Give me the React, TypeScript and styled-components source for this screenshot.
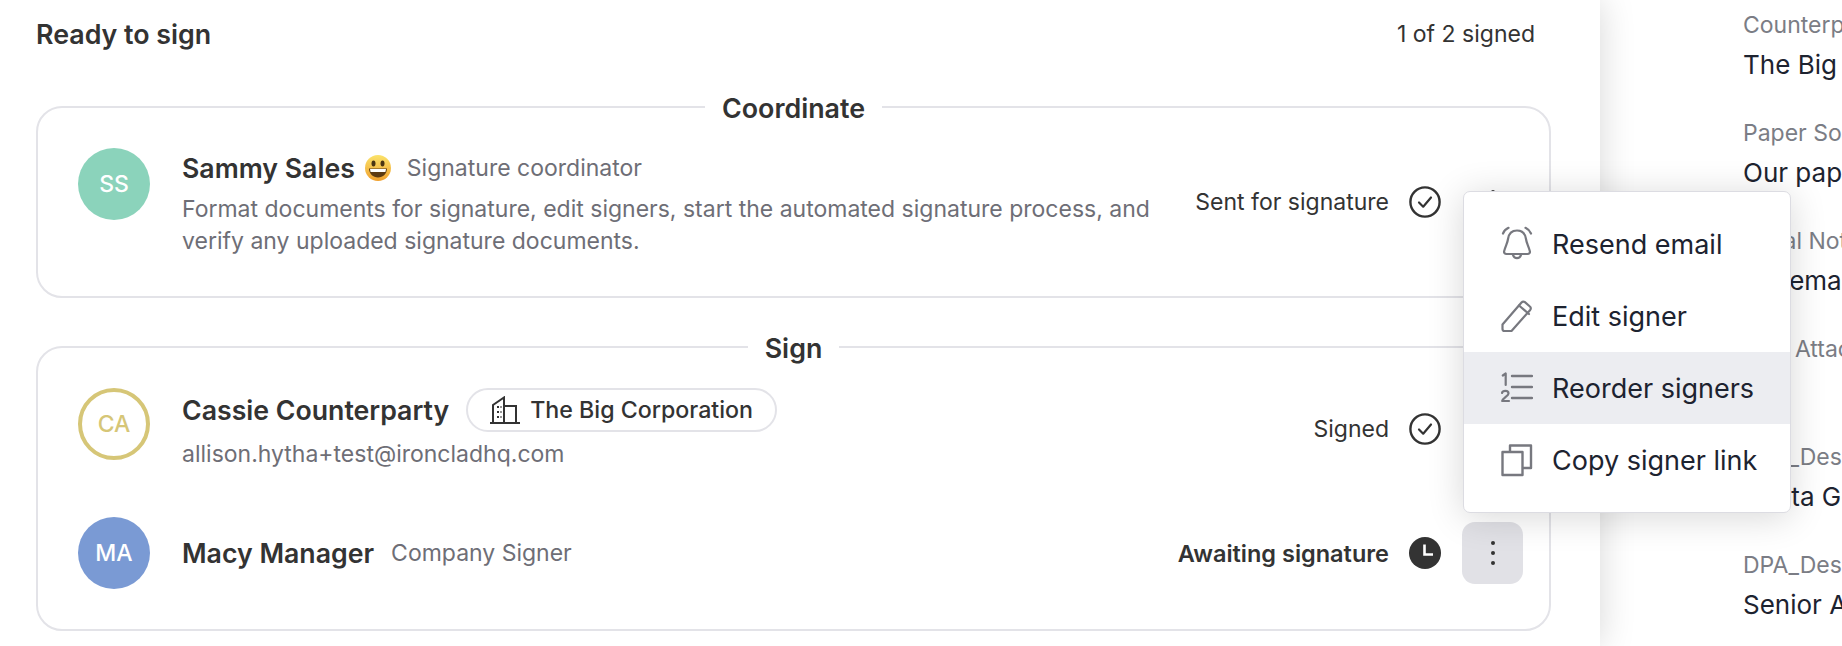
import React from "react";
import styled, { createGlobalStyle } from "styled-components";

const Global = createGlobalStyle`
  html, body { margin: 0; padding: 0; background: #fff; overflow: hidden; }
  body { font-family: Inter, "Liberation Sans", sans-serif; color: #333; }
  * { box-sizing: border-box; }
`;

const Page = styled.div`
  position: relative;
  display: flex;
  width: 1842px;
  height: 646px;
  overflow: hidden;
`;
const Main = styled.main`
  position: relative;
  z-index: 1;
  flex: 0 0 1600px;
  padding: 14px 49px 0 36px;
  background: #fff;
  box-shadow: 0 0 34px rgba(0, 0, 0, 0.16);
`;
const Header = styled.header`
  display: flex;
  align-items: center;
  justify-content: space-between;
  height: 40px;
  padding-right: 16px;
  margin-bottom: 38px;
`;
const Title = styled.h1`
  margin: 0;
  font-size: 26.8px;
  font-weight: 600;
  color: #333;
`;
const Count = styled.span`
  font-size: 23px;
  color: #333;
`;
const Card = styled.fieldset`
  margin: 0 0 34px;
  min-width: 0;
  border: 2px solid #e3e3e8;
  border-radius: 26px;
  padding: 26px 40px 40px;
  display: flex;
  flex-direction: column;
`;
const Legend = styled.legend`
  margin: 0 auto;
  padding: 0 17px;
  height: 30px;
  line-height: 32px;
  font-size: 26.8px;
  font-weight: 600;
  color: #333;
`;
const Row = styled.div<{ $height: number; $gap?: number }>`
  display: flex;
  align-items: center;
  min-height: ${(p) => p.$height}px;
  margin-right: -14px;
  margin-bottom: ${(p) => p.$gap ?? 0}px;
`;
const Avatar = styled.div<{ $bg?: string; $ring?: string; $top?: boolean }>`
  flex: 0 0 72px;
  height: 72px;
  border-radius: 50%;
  align-self: ${(p) => (p.$top ? "flex-start" : "center")};
  display: flex;
  align-items: center;
  justify-content: center;
  font-size: 23px;
  font-weight: 500;
  color: ${(p) => p.$ring ?? "#fff"};
  background: ${(p) => p.$bg ?? "#fff"};
  border: ${(p) => (p.$ring ? `4px solid ${p.$ring}` : "none")};
`;
const Info = styled.div`
  flex: 1;
  min-width: 0;
  margin-left: 32px;
  display: flex;
  flex-direction: column;
`;
const NameLine = styled.div`
  display: flex;
  align-items: center;
  min-height: 40px;
`;
const Name = styled.span`
  font-size: 26.7px;
  font-weight: 600;
  color: #333;
`;
const Role = styled.span<{ $left: number }>`
  margin-left: ${(p) => p.$left}px;
  font-size: 23px;
  color: #6e6e76;
`;
const Description = styled.p`
  margin: 5px 0 -1px;
  width: 990px;
  font-size: 23px;
  line-height: 32px;
  color: #6e6e76;
`;
const Email = styled.div`
  margin-top: 6px;
  font-size: 23px;
  line-height: 32px;
  color: #6e6e76;
`;
const Pill = styled.span`
  display: inline-flex;
  align-items: center;
  gap: 10px;
  height: 44px;
  margin-left: 17px;
  padding: 0 22px;
  border: 2px solid #e3e3e8;
  border-radius: 22px;
  font-size: 23.2px;
  font-weight: 500;
  color: #333;
`;
const StatusText = styled.span<{ $strong?: boolean }>`
  font-size: ${(p) => (p.$strong ? 23.5 : 23)}px;
  font-weight: ${(p) => (p.$strong ? 600 : 400)};
  color: #333;
  white-space: nowrap;
`;
const StatusIcon = styled.svg`
  flex: 0 0 32px;
  width: 32px;
  height: 32px;
  margin: 0 21px 0 20px;
`;
const More = styled.button<{ $active?: boolean }>`
  flex: 0 0 61px;
  width: 61px;
  height: 62px;
  padding: 0;
  border: 0;
  border-radius: 13px;
  background: ${(p) => (p.$active ? "#e1e1e6" : "transparent")};
  display: flex;
  flex-direction: column;
  align-items: center;
  justify-content: center;
  gap: 6px;
`;
const Dot = styled.i`
  width: 4px;
  height: 4px;
  border-radius: 50%;
  background: #333;
`;
const Side = styled.aside`
  flex: 1;
  min-width: 0;
  padding: 9px 0 0 143px;
  display: flex;
  flex-direction: column;
  gap: 34px;
  overflow: hidden;
  background: #fff;
`;
const Field = styled.div`
  display: flex;
  flex-direction: column;
  gap: 6px;
  height: 74px;
  white-space: nowrap;
`;
const FieldLabel = styled.div`
  font-size: 23px;
  line-height: 32px;
  color: #7b7d85;
`;
const FieldValue = styled.div`
  font-size: 26px;
  line-height: 36px;
  color: #1d2330;
`;
const Menu = styled.div`
  position: absolute;
  z-index: 5;
  left: 1463px;
  top: 191px;
  width: 328px;
  height: 322px;
  padding: 16px 0;
  background: #fff;
  border: 1px solid #dcdce2;
  border-radius: 7px;
  box-shadow: 0 4px 36px rgba(0, 0, 0, 0.16);
`;
const MenuItem = styled.div<{ $active?: boolean }>`
  display: flex;
  align-items: center;
  gap: 19px;
  height: 72px;
  padding-left: 37px;
  font-size: 27px;
  color: #1d2330;
  background: ${(p) => (p.$active ? "#ecedf1" : "transparent")};
`;
const MenuIcon = styled.svg`
  flex: 0 0 32px;
  width: 32px;
  height: 36px;
  fill: none;
  stroke: #77787f;
  stroke-width: 2.2;
  stroke-linecap: round;
  stroke-linejoin: round;
`;
const Emoji = styled.svg`
  width: 26px;
  height: 26px;
  margin: 0 16px 0 10px;
`;
const BuildingIcon = styled.svg`
  width: 30px;
  height: 28px;
  fill: none;
  stroke: #333;
  stroke-width: 2;
`;

const Check = () => (
  <StatusIcon viewBox="0 0 32 32" fill="none" stroke="#333">
    <circle cx="16" cy="16" r="14.6" strokeWidth="2.4" />
    <path d="M10 16.5l4.2 4.2L22 11.5" strokeWidth="2.2" strokeLinecap="round" strokeLinejoin="round" />
  </StatusIcon>
);
const Clock = () => (
  <StatusIcon viewBox="0 0 32 32">
    <circle cx="16" cy="16" r="16" fill="#333" />
    <path d="M15.5 7.5V17.5H24" fill="none" stroke="#fff" strokeWidth="2.6" />
  </StatusIcon>
);
const Dots = ({ active }: { active?: boolean }) => (
  <More $active={active} aria-label="More">
    <Dot />
    <Dot />
    <Dot />
  </More>
);

const menuIcons = {
  bell: (
    <>
      <path d="M2 7.5C3 5 5 3 7.5 1.8M30 7.5C29 5 27 3 24.5 1.8" />
      <path d="M5.5 28c-1.8 0-2.8-1.3-2.3-3C5 19 6.5 17 7 13 7.8 7.5 11 4.5 16 4.5S24.200 7.500 25 13c.5 4 2 6 3.800 12 .5 1.700-.5 3-2.300 3z" />
      <path d="M12 29c.6 2 2.200 3.200 4 3.200s3.400-1.200 4-3.200" />
    </>
  ),
  pencil: (
    <>
      <path d="M1.500 26.500 20.500 4.500c1-1.100 2.300-1.200 3.400-.3l5 4.300c1.100.9 1.200 2.300.3 3.400L10.500 33H3.500c-1.200 0-2-.8-2-2z" />
      <path d="M18 7.500l10 8.500" />
    </>
  ),
  order: (
    <>
      <path d="M1.800 5.500 4.700 3.500V15M1 23c.5-2.600 6.500-3 6.500.4 0 2.400-5.700 4.400-6.300 7.600h6.800" strokeWidth="2.200" />
      <path d="M11 6h20M11 17h20M11 28h20" strokeWidth="2.400" />
    </>
  ),
  copy: (
    <>
      <path d="M9 9.500V3.500h21v22.500h-8" strokeWidth="2.400" />
      <rect x="1.500" y="10" width="20" height="23" strokeWidth="2.400" />
    </>
  ),
};

const menu = [
  { label: "Resend email", icon: menuIcons.bell },
  { label: "Edit signer", icon: menuIcons.pencil },
  { label: "Reorder signers", icon: menuIcons.order, active: true },
  { label: "Copy signer link", icon: menuIcons.copy },
];

const fields = [
  ["Counterparty", "The Big Corporation"],
  ["Paper Source", "Our paper"],
  ["Legal Notes", "Via email"],
  ["DPA Attachment", "Yes"],
  ["DPA_Description", "Costa General"],
  ["DPA_Description", "Senior Analyst"],
];

export default function App() {
  return (
    <Page>
      <Global />
      <Main>
        <Header>
          <Title>Ready to sign</Title>
          <Count>1 of 2 signed</Count>
        </Header>
        <Card>
          <Legend>Coordinate</Legend>
          <Row $height={108}>
            <Avatar $bg="#8bd3bb" $top>SS</Avatar>
            <Info>
              <NameLine>
                <Name>Sammy Sales</Name>
                <Emoji viewBox="0 0 26 26">
                  <defs>
                    <linearGradient id="face" x1="0" y1="0" x2="0" y2="1">
                      <stop offset="0" stopColor="#fbe36a" />
                      <stop offset="1" stopColor="#f0a02e" />
                    </linearGradient>
                  </defs>
                  <circle cx="13" cy="13" r="13" fill="url(#face)" />
                  <ellipse cx="8.500" cy="8.500" rx="2" ry="3" fill="#4a3513" />
                  <ellipse cx="17.500" cy="8.500" rx="2" ry="3" fill="#4a3513" />
                  <path d="M4 13.500h18c0 5-4 9-9 9s-9-4-9-9z" fill="#5c3a12" />
                  <path d="M5 14h16l-.6 3H5.600z" fill="#fff" />
                </Emoji>
                <Role $left={0}>Signature coordinator</Role>
              </NameLine>
              <Description>
                Format documents for signature, edit signers, start the automated signature process, and verify any
                uploaded signature documents.
              </Description>
            </Info>
            <StatusText>Sent for signature</StatusText>
            <Check />
            <Dots />
          </Row>
        </Card>
        <Card>
          <Legend>Sign</Legend>
          <Row $height={82} $gap={47}>
            <Avatar $ring="#d6c677" $top>CA</Avatar>
            <Info>
              <NameLine>
                <Name>Cassie Counterparty</Name>
                <Pill>
                  <BuildingIcon viewBox="0 0 30 28">
                    <path d="M0 27h30M3 27V9L14 1.500V27M14 10h12v17" />
                    <path d="M7 11h2M10.500 11h1M7 16h2M10.500 16h1M7 21h2M10.500 21h1" />
                  </BuildingIcon>
                  The Big Corporation
                </Pill>
              </NameLine>
              <Email>allison.hytha+test@ironcladhq.com</Email>
            </Info>
            <StatusText>Signed</StatusText>
            <Check />
            <Dots />
          </Row>
          <Row $height={72}>
            <Avatar $bg="#7a9ad4">MA</Avatar>
            <Info>
              <NameLine>
                <Name>Macy Manager</Name>
                <Role $left={17}>Company Signer</Role>
              </NameLine>
            </Info>
            <StatusText $strong>Awaiting signature</StatusText>
            <Clock />
            <Dots active />
          </Row>
        </Card>
      </Main>
      <Side>
        {fields.map(([label, value], i) => (
          <Field key={i}>
            <FieldLabel>{label}</FieldLabel>
            <FieldValue>{value}</FieldValue>
          </Field>
        ))}
      </Side>
      <Menu>
        {menu.map((m) => (
          <MenuItem key={m.label} $active={m.active}>
            <MenuIcon viewBox="0 0 32 36">{m.icon}</MenuIcon>
            {m.label}
          </MenuItem>
        ))}
      </Menu>
    </Page>
  );
}
